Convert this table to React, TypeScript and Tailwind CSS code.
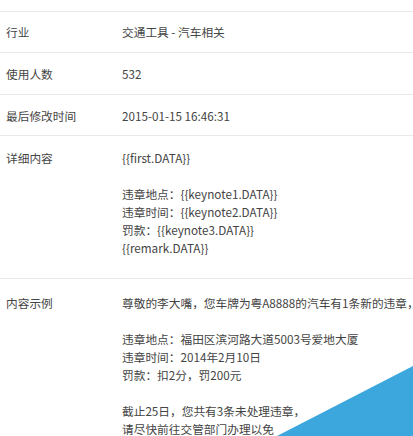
import React from "react";

const font = { fontFamily: '"Noto Sans CJK SC", "Open Sans", sans-serif' };

function Row({ label, children, className = "" }: { label: string; children: React.ReactNode; className?: string }) {
  return (
    <div className={`flex border-b border-[#e9e9e9] ${className}`}>
      <div className="w-[122px] shrink-0 pl-[6px] text-[#444]">{label}</div>
      <div className="text-[#444] whitespace-nowrap">{children}</div>
    </div>
  );
}

export default function App() {
  return (
    <div
      className="relative w-[413px] h-[436px] overflow-hidden bg-white text-[11.7px] leading-[18px]"
      style={font}
    >
      <div className="h-[12px] border-b border-[#e9e9e9]" />
      <Row label="行业" className="pt-[11px] pb-[11px]">交通工具 - 汽车相关</Row>
      <Row label="使用人数" className="pt-[12px] pb-[11px]">532</Row>
      <Row label="最后修改时间" className="pt-[12px] pb-[10px]">2015-01-15 16:46:31</Row>
      <Row label="详细内容" className="pt-[13px] pb-[21px]">
        <div>{"{{first.DATA}}"}</div>
        <div className="h-[18px]" />
        <div>违章地点：{"{{keynote1.DATA}}"}</div>
        <div>违章时间：{"{{keynote2.DATA}}"}</div>
        <div>罚款：{"{{keynote3.DATA}}"}</div>
        <div>{"{{remark.DATA}}"}</div>
      </Row>
      <Row label="内容示例" className="pt-[15px] pb-[21px]">
        <div>尊敬的李大嘴，您车牌为粤A8888的汽车有1条新的违章，</div>
        <div className="h-[18px]" />
        <div>违章地点：福田区滨河路大道5003号爱地大厦</div>
        <div>违章时间：2014年2月10日</div>
        <div>罚款：扣2分，罚200元</div>
        <div className="h-[18px]" />
        <div>截止25日，您共有3条未处理违章，</div>
        <div>请尽快前往交管部门办理以免</div>
      </Row>

      <div className="absolute right-0 bottom-0 w-[136px] h-[70px] bg-[#3ca7dd] [clip-path:polygon(100%_0,100%_100%,0_100%)]" />
    </div>
  );
}
